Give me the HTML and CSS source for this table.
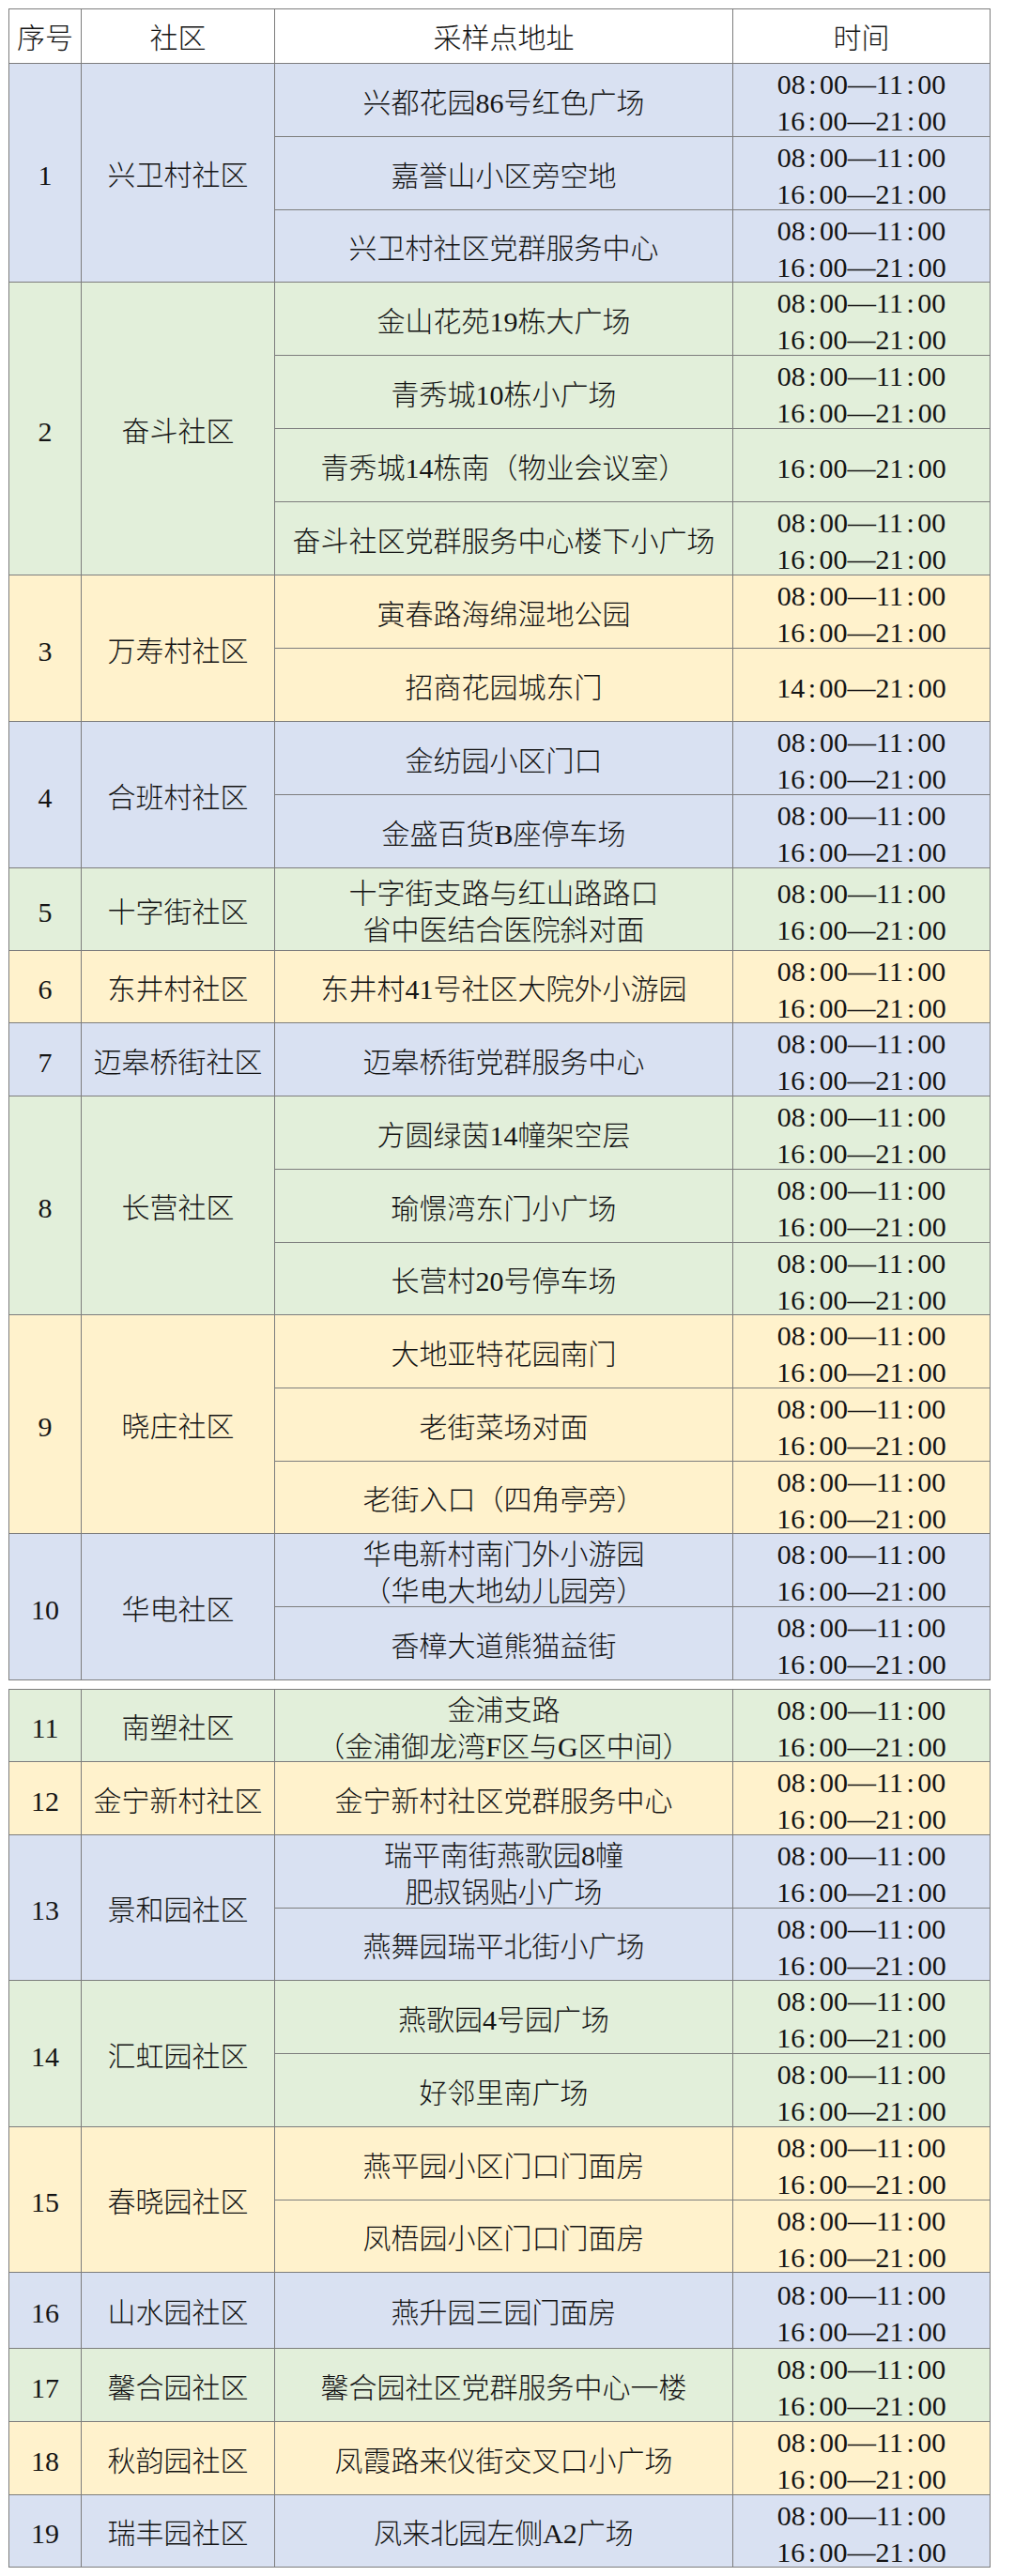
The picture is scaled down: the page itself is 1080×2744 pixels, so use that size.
FILE: index.html
```html
<!DOCTYPE html>
<html lang="zh-CN">
<head>
<meta charset="utf-8">
<title>采样点</title>
<link rel="stylesheet" href="styles.css">
</head>
<body>
<div class="sheet sheet1">
  <div class="cell h">序号</div><div class="cell h">社区</div><div class="cell h">采样点地址</div><div class="cell h">时间</div>

  <div class="cell b s3">1</div><div class="cell b s3">兴卫村社区</div>
  <div class="cell b"><p>兴都花园86号红色广场</p></div><div class="cell b"><p>08<span class="k">:</span>00—11<span class="k">:</span>00<br>16<span class="k">:</span>00—21<span class="k">:</span>00</p></div>
  <div class="cell b"><p>嘉誉山小区旁空地</p></div><div class="cell b"><p>08<span class="k">:</span>00—11<span class="k">:</span>00<br>16<span class="k">:</span>00—21<span class="k">:</span>00</p></div>
  <div class="cell b"><p>兴卫村社区党群服务中心</p></div><div class="cell b"><p>08<span class="k">:</span>00—11<span class="k">:</span>00<br>16<span class="k">:</span>00—21<span class="k">:</span>00</p></div>

  <div class="cell g s4">2</div><div class="cell g s4">奋斗社区</div>
  <div class="cell g"><p>金山花苑19栋大广场</p></div><div class="cell g"><p>08<span class="k">:</span>00—11<span class="k">:</span>00<br>16<span class="k">:</span>00—21<span class="k">:</span>00</p></div>
  <div class="cell g"><p>青秀城10栋小广场</p></div><div class="cell g"><p>08<span class="k">:</span>00—11<span class="k">:</span>00<br>16<span class="k">:</span>00—21<span class="k">:</span>00</p></div>
  <div class="cell g"><p>青秀城14栋南（物业会议室）</p></div><div class="cell g"><p>16<span class="k">:</span>00—21<span class="k">:</span>00</p></div>
  <div class="cell g"><p>奋斗社区党群服务中心楼下小广场</p></div><div class="cell g"><p>08<span class="k">:</span>00—11<span class="k">:</span>00<br>16<span class="k">:</span>00—21<span class="k">:</span>00</p></div>

  <div class="cell y s2">3</div><div class="cell y s2">万寿村社区</div>
  <div class="cell y"><p>寅春路海绵湿地公园</p></div><div class="cell y"><p>08<span class="k">:</span>00—11<span class="k">:</span>00<br>16<span class="k">:</span>00—21<span class="k">:</span>00</p></div>
  <div class="cell y"><p>招商花园城东门</p></div><div class="cell y"><p>14<span class="k">:</span>00—21<span class="k">:</span>00</p></div>

  <div class="cell b s2">4</div><div class="cell b s2">合班村社区</div>
  <div class="cell b"><p>金纺园小区门口</p></div><div class="cell b"><p>08<span class="k">:</span>00—11<span class="k">:</span>00<br>16<span class="k">:</span>00—21<span class="k">:</span>00</p></div>
  <div class="cell b"><p>金盛百货B座停车场</p></div><div class="cell b"><p>08<span class="k">:</span>00—11<span class="k">:</span>00<br>16<span class="k">:</span>00—21<span class="k">:</span>00</p></div>

  <div class="cell g">5</div><div class="cell g">十字街社区</div>
  <div class="cell g"><p>十字街支路与红山路路口<br>省中医结合医院斜对面</p></div><div class="cell g"><p>08<span class="k">:</span>00—11<span class="k">:</span>00<br>16<span class="k">:</span>00—21<span class="k">:</span>00</p></div>

  <div class="cell y">6</div><div class="cell y">东井村社区</div>
  <div class="cell y"><p>东井村41号社区大院外小游园</p></div><div class="cell y"><p>08<span class="k">:</span>00—11<span class="k">:</span>00<br>16<span class="k">:</span>00—21<span class="k">:</span>00</p></div>

  <div class="cell b">7</div><div class="cell b">迈皋桥街社区</div>
  <div class="cell b"><p>迈皋桥街党群服务中心</p></div><div class="cell b"><p>08<span class="k">:</span>00—11<span class="k">:</span>00<br>16<span class="k">:</span>00—21<span class="k">:</span>00</p></div>

  <div class="cell g s3">8</div><div class="cell g s3">长营社区</div>
  <div class="cell g"><p>方圆绿茵14幢架空层</p></div><div class="cell g"><p>08<span class="k">:</span>00—11<span class="k">:</span>00<br>16<span class="k">:</span>00—21<span class="k">:</span>00</p></div>
  <div class="cell g"><p>瑜憬湾东门小广场</p></div><div class="cell g"><p>08<span class="k">:</span>00—11<span class="k">:</span>00<br>16<span class="k">:</span>00—21<span class="k">:</span>00</p></div>
  <div class="cell g"><p>长营村20号停车场</p></div><div class="cell g"><p>08<span class="k">:</span>00—11<span class="k">:</span>00<br>16<span class="k">:</span>00—21<span class="k">:</span>00</p></div>

  <div class="cell y s3">9</div><div class="cell y s3">晓庄社区</div>
  <div class="cell y"><p>大地亚特花园南门</p></div><div class="cell y"><p>08<span class="k">:</span>00—11<span class="k">:</span>00<br>16<span class="k">:</span>00—21<span class="k">:</span>00</p></div>
  <div class="cell y"><p>老街菜场对面</p></div><div class="cell y"><p>08<span class="k">:</span>00—11<span class="k">:</span>00<br>16<span class="k">:</span>00—21<span class="k">:</span>00</p></div>
  <div class="cell y"><p>老街入口（四角亭旁）</p></div><div class="cell y"><p>08<span class="k">:</span>00—11<span class="k">:</span>00<br>16<span class="k">:</span>00—21<span class="k">:</span>00</p></div>

  <div class="cell b s2">10</div><div class="cell b s2">华电社区</div>
  <div class="cell b"><p>华电新村南门外小游园<br>（华电大地幼儿园旁）</p></div><div class="cell b"><p>08<span class="k">:</span>00—11<span class="k">:</span>00<br>16<span class="k">:</span>00—21<span class="k">:</span>00</p></div>
  <div class="cell b"><p>香樟大道熊猫益街</p></div><div class="cell b"><p>08<span class="k">:</span>00—11<span class="k">:</span>00<br>16<span class="k">:</span>00—21<span class="k">:</span>00</p></div>
</div>

<div class="sheet sheet2">
  <div class="cell g">11</div><div class="cell g">南塑社区</div>
  <div class="cell g"><p>金浦支路<br>（金浦御龙湾F区与G区中间）</p></div><div class="cell g"><p>08<span class="k">:</span>00—11<span class="k">:</span>00<br>16<span class="k">:</span>00—21<span class="k">:</span>00</p></div>

  <div class="cell y">12</div><div class="cell y">金宁新村社区</div>
  <div class="cell y"><p>金宁新村社区党群服务中心</p></div><div class="cell y"><p>08<span class="k">:</span>00—11<span class="k">:</span>00<br>16<span class="k">:</span>00—21<span class="k">:</span>00</p></div>

  <div class="cell b s2">13</div><div class="cell b s2">景和园社区</div>
  <div class="cell b"><p>瑞平南街燕歌园8幢<br>肥叔锅贴小广场</p></div><div class="cell b"><p>08<span class="k">:</span>00—11<span class="k">:</span>00<br>16<span class="k">:</span>00—21<span class="k">:</span>00</p></div>
  <div class="cell b"><p>燕舞园瑞平北街小广场</p></div><div class="cell b"><p>08<span class="k">:</span>00—11<span class="k">:</span>00<br>16<span class="k">:</span>00—21<span class="k">:</span>00</p></div>

  <div class="cell g s2">14</div><div class="cell g s2">汇虹园社区</div>
  <div class="cell g"><p>燕歌园4号园广场</p></div><div class="cell g"><p>08<span class="k">:</span>00—11<span class="k">:</span>00<br>16<span class="k">:</span>00—21<span class="k">:</span>00</p></div>
  <div class="cell g"><p>好邻里南广场</p></div><div class="cell g"><p>08<span class="k">:</span>00—11<span class="k">:</span>00<br>16<span class="k">:</span>00—21<span class="k">:</span>00</p></div>

  <div class="cell y s2">15</div><div class="cell y s2">春晓园社区</div>
  <div class="cell y"><p>燕平园小区门口门面房</p></div><div class="cell y"><p>08<span class="k">:</span>00—11<span class="k">:</span>00<br>16<span class="k">:</span>00—21<span class="k">:</span>00</p></div>
  <div class="cell y"><p>凤梧园小区门口门面房</p></div><div class="cell y"><p>08<span class="k">:</span>00—11<span class="k">:</span>00<br>16<span class="k">:</span>00—21<span class="k">:</span>00</p></div>

  <div class="cell b">16</div><div class="cell b">山水园社区</div>
  <div class="cell b"><p>燕升园三园门面房</p></div><div class="cell b"><p>08<span class="k">:</span>00—11<span class="k">:</span>00<br>16<span class="k">:</span>00—21<span class="k">:</span>00</p></div>

  <div class="cell g">17</div><div class="cell g">馨合园社区</div>
  <div class="cell g"><p>馨合园社区党群服务中心一楼</p></div><div class="cell g"><p>08<span class="k">:</span>00—11<span class="k">:</span>00<br>16<span class="k">:</span>00—21<span class="k">:</span>00</p></div>

  <div class="cell y">18</div><div class="cell y">秋韵园社区</div>
  <div class="cell y"><p>凤霞路来仪街交叉口小广场</p></div><div class="cell y"><p>08<span class="k">:</span>00—11<span class="k">:</span>00<br>16<span class="k">:</span>00—21<span class="k">:</span>00</p></div>

  <div class="cell b">19</div><div class="cell b">瑞丰园社区</div>
  <div class="cell b"><p>凤来北园左侧A2广场</p></div><div class="cell b"><p>08<span class="k">:</span>00—11<span class="k">:</span>00<br>16<span class="k">:</span>00—21<span class="k">:</span>00</p></div>
</div>
</body>
</html>
```

FILE: styles.css
```css
html, body {
  margin: 0;
  padding: 0;
  background: #ffffff;
}

body {
  font-family: "Liberation Serif", "Noto Sans CJK SC", serif;
  font-size: 30px;
  font-weight: 300;
  color: #141414;
}

.sheet {
  display: grid;
  grid-template-columns: 76px 205px 487px 273px;
  gap: 1px;
  padding: 1px;
  width: 1046px;
  box-sizing: border-box;
  margin-left: 9px;
  background: #7d7d7d;
}

.sheet1 {
  margin-top: 9px;
  grid-template-rows:
    57px
    77px 77px 76px
    77px 77px 77px 77px
    77px 77px
    77px 77px
    87px
    76px
    77px
    77px 77px 76px
    77px 77px 76px
    77px 77px;
}

.sheet2 {
  margin-top: 9px;
  grid-template-rows:
    76px
    77px
    77px 76px
    77px 77px
    77px 76px
    80px
    77px
    77px
    76px;
}

.cell {
  display: flex;
  align-items: center;
  justify-content: center;
  text-align: center;
  line-height: 39px;
  padding-top: 5px;
  box-sizing: border-box;
  white-space: nowrap;
  overflow: visible;
}

.cell p {
  margin: 0;
}

.h { background: #ffffff; padding-top: 4px; }
.b { background: #d9e1f2; }
.g { background: #e2efda; }
.y { background: #fff2cc; }

.s2 { grid-row: span 2; }
.s3 { grid-row: span 3; }
.s4 { grid-row: span 4; }

.k {
  padding: 0 3.5px;
}
```
